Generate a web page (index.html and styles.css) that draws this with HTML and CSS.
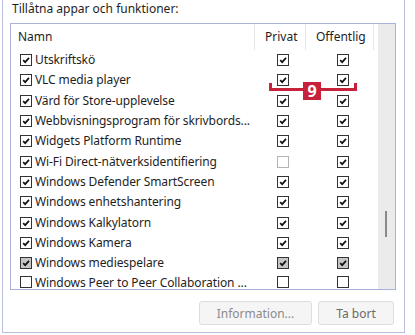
FILE: index.html
```html
<!DOCTYPE html>
<html lang="sv">
<head>
    <meta charset="UTF-8">
    <meta name="viewport" content="width=device-width, initial-scale=1.0">
    <title>Tillåtna appar och funktioner</title>
    <link rel="stylesheet" href="styles.css">
</head>
<body>

    <div class="group">
        <div class="group-title">Tillåtna appar och funktioner:</div>

        <div class="list">
            <div class="table">
                <div class="head">
                    <div class="col-name">Namn</div>
                    <div class="col-priv">Privat</div>
                    <div class="col-pub">Offentlig</div>
                </div>
                <div id="rows"></div>
            </div>
            <div class="scrollbar"><div class="thumb"></div></div>
        </div>

        <div class="buttons">
            <button class="btn btn-info" disabled>Information...</button>
            <button class="btn btn-remove">Ta bort</button>
        </div>
    </div>

    <div class="marker">
        <div class="marker-line"></div>
        <div class="marker-num">9</div>
    </div>

    <script>
        var apps = [
            ["Utskriftskö", "on", "on", "on"],
            ["VLC media player", "on", "on", "on"],
            ["Värd för Store-upplevelse", "on", "on", "on"],
            ["Webbvisningsprogram för skrivbords...", "on", "on", "on"],
            ["Widgets Platform Runtime", "on", "on", "on"],
            ["Wi-Fi Direct-nätverksidentifiering", "on", "off light", "on"],
            ["Windows Defender SmartScreen", "on", "on", "on"],
            ["Windows enhetshantering", "on", "on", "on"],
            ["Windows Kalkylatorn", "on", "on", "on"],
            ["Windows Kamera", "on", "on", "on"],
            ["Windows mediespelare", "on grey", "on grey", "on grey"],
            ["Windows Peer to Peer Collaboration ...", "off", "off", "off"]
        ];

        var check = '<svg viewBox="0 0 12 12" width="12" height="12"><path d="M2.6 6.2 L5 8.6 L9.6 3.4" fill="none" stroke="#111" stroke-width="2"/></svg>';

        function box(state) {
            var html = '<span class="cb ' + state + '">';
            if (state.indexOf("on") === 0) html += check;
            return html + '</span>';
        }

        var out = "";
        for (var i = 0; i < apps.length; i++) {
            var a = apps[i];
            out += '<div class="row">'
                + '<div class="col-name">' + box(a[1]) + '<span class="label">' + a[0] + '</span></div>'
                + '<div class="col-priv">' + box(a[2]) + '</div>'
                + '<div class="col-pub">' + box(a[3]) + '</div>'
                + '</div>';
        }
        document.getElementById("rows").innerHTML = out;
    </script>

</body>
</html>
```

FILE: styles.css
```css
body {
    margin: 0;
    background-color: #fff;
    font-family: "Noto Sans", "Open Sans", sans-serif;
    font-size: 12px;
    color: #1e1e1e;
    position: relative;
}
.group {
    box-sizing: border-box;
    width: 403px;
    height: 333px;
    margin-left: 2px;
    border: 1px solid #bcc0e0;
    border-top: none;
    display: flex;
    flex-direction: column;
}
.group-title {
    height: 23px;
    line-height: 17px;
    padding-left: 9px;
}
.list {
    box-sizing: border-box;
    width: 386px;
    height: 267px;
    margin-left: 7px;
    border: 1px solid #aab2dc;
    display: flex;
}
.table {
    flex: 1;
    overflow: hidden;
}
.head {
    display: flex;
    height: 26px;
    line-height: 26px;
}
.head .col-name {
    padding-left: 7px;
}
.head > div {
    box-sizing: border-box;
    border-right: 1px solid #e6e6e6;
}
.head .col-priv,
.head .col-pub {
    padding-left: 10px;
}
.col-name {
    width: 244px;
    box-sizing: border-box;
}
.col-priv {
    width: 51px;
    box-sizing: border-box;
}
.col-pub {
    width: 68px;
    box-sizing: border-box;
}
.row {
    display: flex;
    height: 20.3px;
    align-items: center;
}
.row:last-child {
    height: 14px;
    align-items: flex-start;
    padding-top: 4px;
    box-sizing: border-box;
}
.row:last-child .cb {
    margin-top: -1px;
}
.row .col-name {
    display: flex;
    align-items: center;
    padding-left: 9px;
    white-space: nowrap;
}
.row .col-priv {
    padding-left: 22px;
    display: flex;
}
.row .col-pub {
    padding-left: 31px;
    display: flex;
}
.label {
    margin-left: 3px;
    line-height: 10px;
    letter-spacing: -0.1px;
}
.cb {
    box-sizing: border-box;
    width: 12px;
    height: 12px;
    border: 1px solid #333;
    background: #fff;
    display: flex;
    align-items: center;
    justify-content: center;
    flex-shrink: 0;
}
.cb svg {
    display: block;
    width: 10px;
    height: 10px;
}
.cb.light {
    border-color: #b4b4b4;
}
.cb.grey {
    background: #c6c6c6;
}
.scrollbar {
    width: 17px;
    background-color: #ebebeb;
    position: relative;
}
.thumb {
    position: absolute;
    left: 7px;
    top: 187px;
    width: 2px;
    height: 26px;
    background-color: #8a8a8a;
}
.buttons {
    display: flex;
    justify-content: flex-end;
    gap: 6px;
    padding: 11px 10px 0 0;
}
.btn {
    box-sizing: border-box;
    height: 24px;
    font-family: inherit;
    font-size: 12px;
    color: #8b8b8b;
    background-color: #f5f5f5;
    border: 1px solid #dedede;
    border-radius: 3px;
}
.btn-info {
    width: 113px;
}
.btn-remove {
    width: 76px;
    color: #6a6a6a;
}
.marker {
    position: absolute;
    left: 269px;
    top: 82px;
    width: 88px;
    height: 18px;
}
.marker-line {
    position: absolute;
    left: 0;
    right: 0;
    top: 1px;
    height: 5px;
    border: 3px solid #c7213c;
    border-top: none;
}
.marker-num {
    position: absolute;
    left: 34px;
    top: 0;
    width: 18px;
    height: 18px;
    background-color: #c7213c;
    color: #fff;
    font-weight: bold;
    font-size: 16px;
    line-height: 18px;
    text-align: center;
}
```
